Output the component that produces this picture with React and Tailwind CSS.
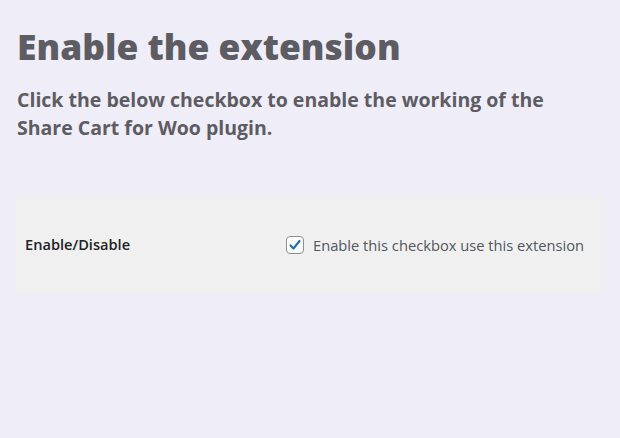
import React from "react";

export default function App() {
  return (
    <div className="min-h-[438px] w-[620px] bg-[#efedf7] px-[15px] pt-[22px] font-['Open_Sans',sans-serif]">
      <h1 className="pl-[2px] text-[35.4px] font-extrabold leading-[48px] text-[#5d5c63]">Enable the extension</h1>
      <p className="mt-[16px] w-[545px] pl-[2px] text-[19.5px] font-bold leading-[28px] text-[#5d5c63]">
        Click the below checkbox to enable the working of the Share Cart for Woo plugin.
      </p>
      <div className="mt-[54px] flex h-[98px] w-[589px] items-center bg-[#f0f0f0]">
        <span className="w-[271px] pl-[10px] text-[14.6px] font-semibold text-[#1d2327]">Enable/Disable</span>
        <label className="flex items-center gap-[9px]">
          <span className="flex h-[18px] w-[18px] items-center justify-center rounded-[4px] border border-[#8c8f94] bg-white">
            <svg width="14" height="14" viewBox="0 0 14 14">
              <path d="M2.5 7.5 L5.5 10.5 L11.5 3" fill="none" stroke="#2271b1" strokeWidth="2.2" strokeLinecap="round" strokeLinejoin="round" />
            </svg>
          </span>
          <span className="text-[14.7px] text-[#50575e]">Enable this checkbox use this extension</span>
        </label>
      </div>
    </div>
  );
}
